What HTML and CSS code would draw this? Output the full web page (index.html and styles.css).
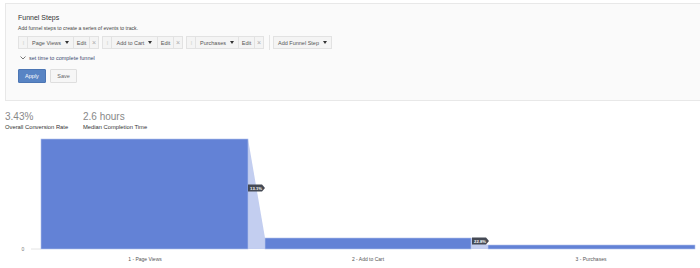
FILE: index.html
```html
<!DOCTYPE html>
<html lang="en">
<head>
    <meta charset="UTF-8">
    <title>Funnel</title>
    <link rel="stylesheet" href="styles.css">
</head>
<body>
    <div class="panel">
        <div class="panel-title">Funnel Steps</div>
        <div class="panel-sub">Add funnel steps to create a series of events to track.</div>

        <div class="steps">
            <div class="step">
                <span class="handle">&#8286;&#8286;</span>
                <span class="step-name name-lg">Page Views <span class="caret"></span></span>
                <span class="step-edit">Edit</span>
                <span class="step-x">&times;</span>
            </div>
            <div class="step">
                <span class="handle">&#8286;&#8286;</span>
                <span class="step-name name-lg">Add to Cart <span class="caret"></span></span>
                <span class="step-edit">Edit</span>
                <span class="step-x">&times;</span>
            </div>
            <div class="step">
                <span class="handle">&#8286;&#8286;</span>
                <span class="step-name name-sm">Purchases <span class="caret"></span></span>
                <span class="step-edit">Edit</span>
                <span class="step-x">&times;</span>
            </div>
            <div class="divider"></div>
            <div class="add-step">Add Funnel Step <span class="caret"></span></div>
        </div>

        <div class="time-link">
            <svg width="6" height="4" viewBox="0 0 6 4"><path d="M0.5 0.5 L3 3 L5.5 0.5" fill="none" stroke="#555" stroke-width="0.8"/></svg>
            set time to complete funnel
        </div>

        <div class="actions">
            <button class="btn btn-primary">Apply</button>
            <button class="btn">Save</button>
        </div>
    </div>

    <div class="stats">
        <div class="stat">
            <div class="stat-value">3.43%</div>
            <div class="stat-label">Overall Conversion Rate</div>
        </div>
        <div class="stat">
            <div class="stat-value">2.6 hours</div>
            <div class="stat-label">Median Completion Time</div>
        </div>
    </div>

    <svg class="chart" width="700" height="134" viewBox="0 134 700 134">
        <line x1="31" y1="249" x2="41" y2="249" stroke="#e4e4e4" stroke-width="1"/>
        <text x="23" y="250.5" class="axis">0</text>

        <polygon points="248,139 265,238 265,249 248,249" fill="#c3cef0"/>
        <polygon points="471,238 488,245 488,249 471,249" fill="#c3cef0"/>

        <rect x="41" y="139" width="207" height="110" fill="#6382d6" stroke="#b3c1ec" stroke-width="0.6"/>
        <rect x="265" y="238" width="206" height="11" fill="#6382d6" stroke="#b3c1ec" stroke-width="0.6"/>
        <rect x="488" y="245" width="207" height="4" fill="#6382d6" stroke="#b3c1ec" stroke-width="0.6"/>

        <path d="M248 184.5 H262 L265 188 L262 191.5 H248 Z" fill="#454a55"/>
        <text x="256" y="189.6" class="tag">13.1%</text>
        <path d="M472 237.5 H486 L489 241 L486 244.5 H472 Z" fill="#454a55"/>
        <text x="480" y="242.6" class="tag">22.8%</text>

        <text x="145" y="261" class="xlabel">1 -  Page Views</text>
        <text x="368" y="261" class="xlabel">2 - Add to Cart</text>
        <text x="591" y="261" class="xlabel">3 - Purchases</text>
    </svg>
</body>
</html>
```

FILE: styles.css
```css
body {
    margin: 0;
    font-family: 'Liberation Sans', Arial, sans-serif;
    background: #fff;
    color: #333;
    overflow: hidden;
}
.panel {
    margin: 3px 0 0 5px;
    height: 98px;
    box-sizing: border-box;
    border: 1px solid #e8e8e8;
    border-right: none;
    background: #fafafa;
    padding: 9px 0 0 12px;
}
.panel-title {
    font-size: 7px;
    color: #333;
    line-height: 9px;
}
.panel-sub {
    font-size: 5.1px;
    color: #444;
    margin-top: 3px;
    line-height: 7px;
}
.steps {
    display: flex;
    align-items: center;
    margin-top: 4px;
    height: 13px;
}
.step {
    display: flex;
    height: 13px;
    box-sizing: border-box;
    border: 1px solid #e2e2e2;
    background: #f4f4f4;
    margin-right: 3px;
    font-size: 5.5px;
    color: #555;
}
.step > span {
    display: flex;
    align-items: center;
    justify-content: center;
    border-right: 1px solid #e2e2e2;
}
.step > span:last-child {
    border-right: none;
}
.handle {
    width: 8px;
    color: #c4c4c4;
    font-size: 5px;
    letter-spacing: -1px;
}
.step-name {
    gap: 4px;
}
.name-lg {
    width: 45px;
}
.name-sm {
    width: 42px;
}
.step-edit {
    width: 15px;
}
.step-x {
    width: 8px;
    color: #aaa;
    font-size: 7px;
}
.caret {
    display: inline-block;
    width: 0;
    height: 0;
    border-left: 2.5px solid transparent;
    border-right: 2.5px solid transparent;
    border-top: 3px solid #333;
}
.divider {
    width: 1px;
    height: 15px;
    background: #e4e4e4;
    margin: 0 3px 0 2px;
}
.add-step {
    display: flex;
    align-items: center;
    justify-content: center;
    gap: 4px;
    width: 59px;
    height: 13px;
    box-sizing: border-box;
    border: 1px solid #e2e2e2;
    background: #f4f4f4;
    font-size: 5.5px;
    color: #555;
}
.time-link {
    display: flex;
    align-items: center;
    gap: 3px;
    margin: 5px 0 0 2px;
    font-size: 5.5px;
    color: #3b4a70;
    height: 8px;
}
.actions {
    display: flex;
    gap: 4px;
    margin-top: 7px;
}
.btn {
    font-family: 'Liberation Sans', Arial, sans-serif;
    height: 14px;
    padding: 0;
    width: 27px;
    font-size: 5.5px;
    border: 1px solid #dedede;
    background: #f6f6f6;
    color: #666;
    border-radius: 1px;
}
.btn-primary {
    width: 28px;
    background: #5884c4;
    border-color: #4c76b4;
    color: #fff;
}
.stats {
    display: flex;
    padding: 10px 0 0 5px;
    height: 33px;
    box-sizing: border-box;
}
.stat {
    width: 78px;
}
.stat-value {
    font-size: 10px;
    color: #888;
    line-height: 11px;
    font-weight: 300;
}
.stat-label {
    font-size: 5.8px;
    color: #333;
    margin-top: 2px;
}
.chart {
    display: block;
}
.chart .axis {
    font-size: 5px;
    fill: #777;
    text-anchor: middle;
}
.chart .tag {
    font-size: 4.2px;
    fill: #fff;
    font-weight: bold;
    text-anchor: middle;
}
.chart .xlabel {
    font-size: 5px;
    fill: #555;
    text-anchor: middle;
}
```
